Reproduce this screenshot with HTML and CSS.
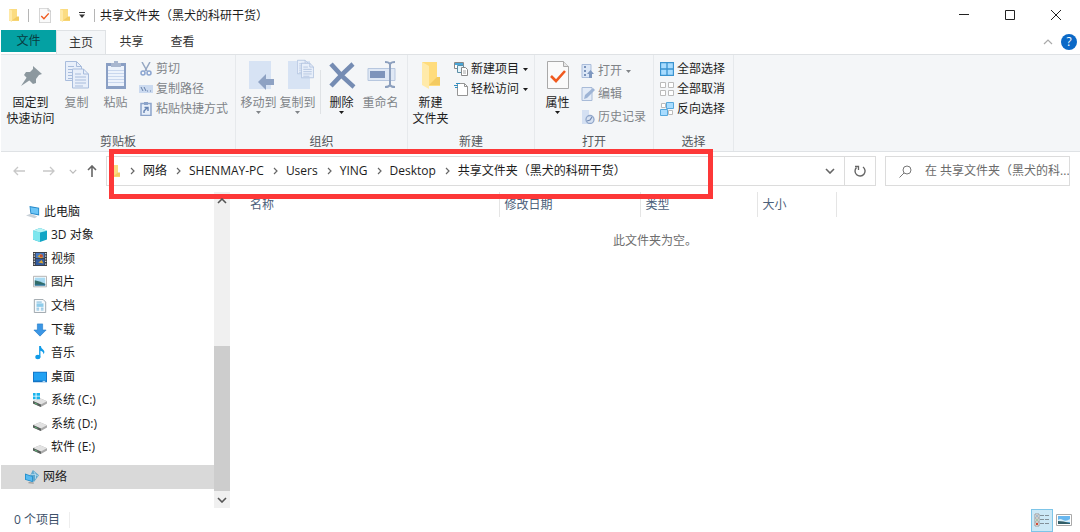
FILE: index.html
```html
<!DOCTYPE html>
<html lang="zh-CN">
<head>
<meta charset="utf-8">
<title>共享文件夹（黑犬的科研干货）</title>
<link rel="stylesheet" href="styles.css">
</head>
<body>
<svg class="defs" aria-hidden="true">
  <symbol id="folder" viewBox="0 0 12 14"><path d="M1 1h8v8h2v4H1z" fill="#fbdc82"/><path d="M1 1l3 1.500v11.500L1 12.500z" fill="#ffe9a6"/><path d="M4 12.500h7v-4H9" fill="#f3cb62"/></symbol>
  <symbol id="checkdoc" viewBox="0 0 22 28"><path d="M.5.5h16l5 5v22H.5z" fill="#fafafa" stroke="#a9a9a9"/><path d="M16.500.5v5h5" fill="#e6e6e6" stroke="#a9a9a9"/><path d="M4 15l5 5 9-10" fill="none" stroke="#f0591e" stroke-width="2.600"/></symbol>
  <symbol id="page" viewBox="0 0 17 20"><path d="M.5.5h11l5 5v14H.5z" fill="#e8effa" stroke="#a8bcdc"/><path d="M11.500.5v5h5M3 5.500h6M3 8.500h11M3 11.500h11M3 14.500h11M3 17.500h8" fill="none" stroke="#a8bcdc"/></symbol>
  <symbol id="drive" viewBox="0 0 16 14"><path d="M0 7l8-3 8 3.500v2.500l-7 4-9-4z" fill="#a9a9a9"/><path d="M0 7l8-3 8 3.500-7 3.500z" fill="#e2e2e2"/><path d="M0 7l9 4v3L0 10z" fill="#555b58"/><path d="M2 9.500l3 1.500" stroke="#5cc47a"/></symbol>
  <symbol id="sep" viewBox="0 0 5 8"><path d="M1 1l3 3-3 3" fill="none" stroke="#666" stroke-width="1.200"/></symbol>
  <symbol id="down" viewBox="0 0 10 6"><path d="M1 1l4 4 4-4" fill="none" stroke="currentColor" stroke-width="1.600"/></symbol>
  <symbol id="caret" viewBox="0 0 5 3"><path d="M0 0h5L2.500 3z" fill="currentColor"/></symbol>
</svg>

<div class="window">
  <header class="titlebar">
    <svg class="s12"><use href="#folder"/></svg>
    <span class="rule"></span>
    <svg class="titledoc"><use href="#checkdoc"/></svg>
    <svg class="s12"><use href="#folder"/></svg>
    <svg class="quick" viewBox="0 0 6 6"><path d="M0 .5h6" stroke="#333"/><path d="M0 2.500h6L3 6z" fill="#333"/></svg>
    <span class="rule"></span>
    <h1>共享文件夹（黑犬的科研干货）</h1>
    <div class="controls">
      <button aria-label="最小化"><svg viewBox="0 0 10 10"><path d="M0 4.500h10"/></svg></button>
      <button aria-label="最大化"><svg viewBox="0 0 10 10"><path d="M.5.5h9v9h-9z"/></svg></button>
      <button aria-label="关闭"><svg viewBox="0 0 10 10"><path d="M0 0l10 10M10 0L0 10"/></svg></button>
    </div>
  </header>

  <nav class="tabs">
    <button class="file">文件</button>
    <button class="active">主页</button>
    <button>共享</button>
    <button>查看</button>
    <div class="help">
      <button aria-label="折叠功能区"><svg class="fold" viewBox="0 0 10 6"><path d="M1 5l4-4 4 4" fill="none" stroke="#aaa" stroke-width="1.200"/></svg></button>
      <button class="question" aria-label="帮助">?</button>
    </div>
  </nav>

  <section class="ribbon">
    <div class="group clipboard">
      <div class="tools">
        <button class="big wide"><svg viewBox="0 0 32 32"><g fill="#8c989f"><path d="M18 7l9 8-3 1-3 4v4l-3 1-9-9 2-3h4l3-3z"/><path d="M12 18l3 3-9 6z"/></g></svg><span>固定到<br>快速访问</span></button>
        <button class="big dim"><svg viewBox="0 0 32 32"><use href="#page" x="4" y="2" width="17" height="20"/><use href="#page" x="11" y="9" width="17" height="21"/></svg><span>复制</span></button>
        <button class="big dim"><svg viewBox="0 0 32 32"><path d="M6 4h20v26H6z" fill="#8a9fc4"/><path d="M8 7h16v20H8z" fill="#edf3fc"/><path d="M11 4h3V2h4v2h3v4H11z" fill="#a9b7cf"/><path d="M8 11.500h16M8 14.500h16M8 17.500h16M8 20.500h16M8 23.500h16" stroke="#c9d7ee"/></svg><span>粘贴</span></button>
        <div class="small-list dim">
          <button><svg viewBox="0 0 14 14"><path d="M3 0l5 9M11 0L6 9" stroke="#94a6c2" stroke-width="1.500"/><circle cx="4" cy="11" r="2" fill="none" stroke="#8ba5d0" stroke-width="1.500"/><circle cx="10" cy="11" r="2" fill="none" stroke="#8ba5d0" stroke-width="1.500"/></svg>剪切</button>
          <button><svg viewBox="0 0 14 14"><path d="M0 3h14v8H0z" fill="#cbdaf0"/><path d="M2 5l2 4M5 5l2 4M8 9h1M11 9h1" stroke="#657fa8"/></svg>复制路径</button>
          <button><svg viewBox="0 0 14 14"><path d="M2 1.500h10v12H2z" fill="#e7effa" stroke="#8ca4ca" stroke-width="1.500"/><path d="M5 0h4v3H5z" fill="#8ca4ca"/><path d="M5 11V9l3-3M5.500 5.500H9V9" fill="none" stroke="#6583b2" stroke-width="1.400"/></svg>粘贴快捷方式</button>
        </div>
      </div>
      <h2>剪贴板</h2>
    </div>

    <div class="group organize">
      <div class="tools">
        <button class="big dim"><svg viewBox="0 0 32 32"><path d="M6 2h22v28H6z" fill="#d7e3f4"/><path d="M15 23l8-8v5h8v6h-8v5z" fill="#8ea2c3"/></svg><span>移动到</span><svg class="caret"><use href="#caret"/></svg></button>
        <button class="big dim"><svg viewBox="0 0 32 32"><path d="M6 2h22v28H6z" fill="#d7e3f4"/><use href="#page" x="15" y="0" width="12" height="16"/><use href="#page" x="19" y="3" width="13" height="17"/></svg><span>复制到</span><svg class="caret"><use href="#caret"/></svg></button>
        <span class="divider"></span>
        <button class="big"><svg viewBox="0 0 32 32"><path d="M5 5q11 13 23 23M27 5Q15 16 5 27" fill="none" stroke="#758cb3" stroke-width="4.500"/></svg><span>删除</span><svg class="caret"><use href="#caret"/></svg></button>
        <button class="big dim"><svg viewBox="0 0 32 32"><path d="M3 9.500h27v12H3z" fill="#dfe8f5" stroke="#b7c7df"/><path d="M5 12h15v7H5z" fill="#7e94bb"/><path d="M20 3q4 0 5 2q1-2 5-2M25 5v22M20 28q4 0 5-2q1 2 5 2" fill="none" stroke="#8da0be" stroke-width="2"/></svg><span>重命名</span></button>
      </div>
      <h2>组织</h2>
    </div>

    <div class="group create">
      <div class="tools">
        <button class="big"><svg viewBox="0 0 32 32"><path d="M7 3h15v16h3v8H14z" fill="#ffdc7c"/><path d="M7 3l7 4v23l-7-4z" fill="#ffeaaa"/><path d="M14 26h11v-8h-3" fill="#f3ca61"/></svg><span>新建<br>文件夹</span></button>
        <div class="small-list">
          <button><svg viewBox="0 0 14 14"><path d="M.5.5h9v6h-9z" fill="#fff" stroke="#888"/><path d="M1 1h8v2H1z" fill="#48a5d7"/><path d="M3.500 3.500h6v7h-6z" fill="#e7f5fb" stroke="#5b8ea6"/><path d="M7.500 5.500h4l2 2v6h-6z" fill="#fff" stroke="#888"/><path d="M9 9h3M9 11h3" stroke="#a5a5a5"/></svg>新建项目<svg class="caret"><use href="#caret"/></svg></button>
          <button><svg viewBox="0 0 14 14"><path d="M3.500 1.500h7l3 3v9h-10z" fill="#fff" stroke="#959595"/><path d="M10.500 1.500v3h3" fill="none" stroke="#959595"/><path d="M2 1.500h4M0 3.500h4M1 5.500h3" stroke="#318fc2"/></svg>轻松访问<svg class="caret"><use href="#caret"/></svg></button>
        </div>
      </div>
      <h2>新建</h2>
    </div>

    <div class="group open">
      <div class="tools">
        <button class="big"><svg viewBox="0 0 32 32"><use href="#checkdoc" x="5" y="2" width="22" height="28"/></svg><span>属性</span><svg class="caret"><use href="#caret"/></svg></button>
        <div class="small-list loose dim">
          <button><svg viewBox="0 0 14 14"><path d="M1 .5h9v13H1z" fill="#dce7f6" stroke="#aabddb"/><path d="M3 2h2v2H3zM3 6h2v2H3zM3 10h2v2H3z" fill="#7992ba"/><path d="M6 10l3.500-4L13 10h-2v4H8v-4z" fill="#7f98c0"/></svg>打开<svg class="caret"><use href="#caret"/></svg></button>
          <button><svg viewBox="0 0 14 14"><path d="M1 .5h10v13H1z" fill="#e3ebf7" stroke="#a8bbd8"/><path d="M3 12l1-4 8-7 2 2-8 8z" fill="#9eb4d5"/></svg>编辑</button>
          <button><svg viewBox="0 0 14 14"><path d="M1 0h7v14H1z" fill="#d4e0f2"/><circle cx="9" cy="9.500" r="4" fill="#d7e2f2" stroke="#91a7cb" stroke-width="1.300"/><path d="M6 11l3-1 2-3" fill="none" stroke="#7189b3" stroke-width="1.200"/></svg>历史记录</button>
        </div>
      </div>
      <h2>打开</h2>
    </div>

    <div class="group select">
      <div class="tools">
        <div class="small-list">
          <button><svg viewBox="0 0 14 14"><path d="M.5.5h13v13H.5zM7 .5v13M.5 7h13" fill="#a8dcff" stroke="#3a93cf" stroke-width="1.300"/></svg>全部选择</button>
          <button><svg viewBox="0 0 14 14"><path d="M.5.5h5v5h-5zM8.500.5h5v5h-5zM.5 8.500h5v5h-5zM8.500 8.500h5v5h-5z" fill="#fff" stroke="#bbb"/></svg>全部取消</button>
          <button><svg viewBox="0 0 14 14"><path d="M1.500 1.500h4v4h-4zM8.500 8.500h4v4h-4z" fill="#fff" stroke="#bbb"/><path d="M6.500.5h7v6h-7zM.5 7.500h7v6h-7z" fill="#a8dcff" stroke="#57a8dc"/></svg>反向选择</button>
        </div>
      </div>
      <h2>选择</h2>
    </div>
  </section>

  <section class="location">
    <div class="history">
      <button aria-label="后退"><svg viewBox="0 0 12 12"><path d="M12 6H1M5 2L1 6l4 4"/></svg></button>
      <button aria-label="前进"><svg viewBox="0 0 12 12"><path d="M0 6h11M7 2l4 4-4 4"/></svg></button>
      <button class="recent" aria-label="最近位置"><svg class="tiny"><use href="#down"/></svg></button>
      <button class="up" aria-label="上移"><svg viewBox="0 0 12 12"><path d="M6 12V1M2 5l4-4 4 4"/></svg></button>
    </div>
    <div class="address">
      <svg class="s12"><use href="#folder"/></svg>
      <div class="crumbs">
        <svg><use href="#sep"/></svg><a href="#net">网络</a>
        <svg><use href="#sep"/></svg><a href="#pc">SHENMAY-PC</a>
        <svg><use href="#sep"/></svg><a href="#users">Users</a>
        <svg><use href="#sep"/></svg><a href="#ying">YING</a>
        <svg><use href="#sep"/></svg><a href="#desktop">Desktop</a>
        <svg><use href="#sep"/></svg><a href="#share">共享文件夹（黑犬的科研干货）</a>
      </div>
      <button class="drop" aria-label="以前的位置"><svg class="chev"><use href="#down"/></svg></button>
      <button class="refresh" aria-label="刷新"><svg viewBox="0 0 12 12"><path d="M2.500 2.500A5 5 0 1 0 9 2" fill="none" stroke="#666" stroke-width="1.400"/><path d="M1 1.500h3.500V5" fill="none" stroke="#666" stroke-width="1.300"/></svg></button>
    </div>
    <label class="search">
      <svg viewBox="0 0 13 13"><circle cx="8" cy="5" r="4"/><path d="M5 8l-4.500 4.500"/></svg>
      <input type="text" aria-label="搜索" placeholder="在 共享文件夹（黑犬的科...">
    </label>
    <div class="highlight"></div>
  </section>

  <main class="body">
    <aside class="sidebar">
      <ul class="tree">
        <li class="root"><svg viewBox="0 0 16 16"><path d="M4 1l11 2v9L5 10z" fill="#2388c9"/><path d="M5 2.500l9 1.500v6.500L6 9z" fill="#6cc5f6"/><path d="M0 12l5-2 8 3-3 2z" fill="#c9d1d8"/></svg>此电脑</li>
        <li><svg viewBox="0 0 16 16"><path d="M0 3l8-3 8 3v10l-8 3-8-3z" fill="#10a5c5"/><path d="M0 3l8 2v11l-8-3z" fill="#7de6ee"/><path d="M0 3l8-3 8 3-8 2z" fill="#b6f4f5"/></svg>3D 对象</li>
        <li><svg viewBox="0 0 16 16"><path d="M0 0h16v16H0z" fill="#3c3c3f"/><path d="M3 1h10v6H3z" fill="#497bc4"/><path d="M3 8h10v7H3z" fill="#315b9f"/><path d="M5 5l4-3 3 4-3 1zM6 12l4-3 2 4z" fill="#d7a338"/><path d="M8 3h3v3H8z" fill="#c34c35"/><path d="M1.500 1v14M14.500 1v14" stroke="#ddd" stroke-width="1.500" stroke-dasharray="1.500 1.500"/></svg>视频</li>
        <li><svg viewBox="0 0 16 16"><path d="M.5 1.500h15v12H.5z" fill="#fff" stroke="#aaa"/><path d="M2 3h12v9H2z" fill="#a9daf2"/><path d="M2 6q5 1 12 4v2H2z" fill="#326c69"/><path d="M2 11h12v1H2z" fill="#2d78b4"/></svg>图片</li>
        <li><svg viewBox="0 0 16 16"><path d="M1.500.5h10l3 3v12h-13z" fill="#f7fafc" stroke="#929ba2"/><path d="M4 3.500h6M4 10.500h3M9 10.500h3M4 12.500h3M9 12.500h3" stroke="#66aed8"/><path d="M4 5h8v4H4z" fill="#8fcceb"/></svg>文档</li>
        <li><svg viewBox="0 0 16 16"><path d="M5 1h6v7h4l-7 7-7-7h4z" fill="#3b96e5" stroke="#2379c6" stroke-width=".7"/></svg>下载</li>
        <li><svg viewBox="0 0 16 16"><ellipse cx="5.500" cy="12.500" rx="3" ry="2.500" fill="#109be8"/><path d="M7 0h2q0 3 3 4.500 2 2 0 5 0-3-3.500-4V13H7z" fill="#109be8"/></svg>音乐</li>
        <li><svg viewBox="0 0 16 16"><path d="M0 2h16v12H0z" fill="#1474c4"/><path d="M1 3h14v9H1z" fill="#22a2f3"/><path d="M11 13h3" stroke="#e3f5ff"/></svg>桌面</li>
        <li><svg viewBox="0 0 16 16"><use href="#drive" y="2" width="16" height="14"/><path d="M0 0h3v3H0zM4 0h4v3H4zM0 4h3v3H0zM4 4h4v3H4z" fill="#19b4ed"/></svg>系统 (C:)</li>
        <li><svg viewBox="0 0 16 16"><use href="#drive" y="2" width="16" height="14"/></svg>系统 (D:)</li>
        <li><svg viewBox="0 0 16 16"><use href="#drive" y="2" width="16" height="14"/></svg>软件 (E:)</li>
      </ul>
      <div class="network"><svg viewBox="0 0 16 16"><path d="M9 0l7 6-6 8-4-8z" fill="#5da6cc"/><path d="M10 2q3 2 2 8M7 5q5-1 8 2" fill="none" stroke="#b9def0"/><path d="M0 4l9 3v7l-9-3z" fill="#218ecb"/><path d="M1 5.500l7 2.300v4.700l-7-2z" fill="#57b9f0"/><path d="M4 14.500l6 .5" stroke="#999" stroke-width="1.500"/></svg>网络</div>
    </aside>
    <div class="scrollbar">
      <button aria-label="向上滚动"><svg class="chev flip"><use href="#down"/></svg></button>
      <span class="thumb"></span>
      <button aria-label="向下滚动"><svg class="chev"><use href="#down"/></svg></button>
    </div>
    <section class="content">
      <table>
        <thead><tr><th class="name">名称</th><th class="date">修改日期</th><th class="type">类型</th><th class="size">大小</th></tr></thead>
      </table>
      <p>此文件夹为空。</p>
    </section>
  </main>

  <footer class="status">
    <span class="count">0 个项目</span>
    <button class="view chosen" aria-label="详细信息"><svg viewBox="0 0 16 14"><path d="M1 1h4v12H1zM1 5h4M1 9h4" fill="#fff" stroke="#999"/><path d="M6 2.500h4M11 2.500h4M6 6.500h4M11 6.500h4M6 10.500h4M11 10.500h4" stroke="#829099"/><path d="M2 3h2" stroke="#44799c"/><path d="M2 7h2" stroke="#4f8a54"/><path d="M2 11h2" stroke="#d24b35" stroke-width="2"/></svg></button>
    <button class="view" aria-label="大图标"><svg viewBox="0 0 16 14"><path d="M.5 1.500h15v11H.5z" fill="#fff" stroke="#aaa"/><path d="M2 3h12v8H2z" fill="#68b7ef"/><path d="M2 7q2-2 5 0t7-1v3H2z" fill="#d8eef8"/><path d="M2 8q5 0 12 2v1H2z" fill="#315d67"/></svg></button>
  </footer>
</div>
</body>
</html>
```
FILE: styles.css
```css
* { box-sizing: border-box; }

body {
  margin: 0;
  background: #fff;
  color: #1c1c1c;
  font: 12px/16px "Open Sans", "Noto Sans CJK SC", sans-serif;
}

button {
  display: flex;
  align-items: center;
  justify-content: center;
  margin: 0;
  padding: 0;
  border: 0;
  background: none;
  color: inherit;
  font: inherit;
  white-space: nowrap;
}

svg { flex: none; display: block; }
h1, h2, p, ul { margin: 0; padding: 0; font-size: 12px; font-weight: 400; }
a { color: inherit; text-decoration: none; }

.defs { display: none; }
.s12 { width: 12px; height: 14px; }
.chev { width: 10px; height: 6px; }
.tiny { width: 8px; height: 5px; }
.flip { transform: rotate(180deg); }
.caret { width: 5px; height: 3px; }

.window {
  display: flex;
  flex-direction: column;
  min-height: 100vh;
  padding-left: 1px;
}

/* Title bar */
.titlebar {
  display: flex;
  align-items: center;
  height: 30px;
  padding: 0 1px 0 7px;
}
.titlebar h1 { padding-top: 2px; }
.rule { width: 1px; height: 13px; background: #b5b5b5; margin: 0 5px 0 8px; }
.titledoc { width: 12px; height: 15px; margin: 0 8px 0 5px; }
.quick { width: 6px; height: 6px; margin: 0 1px 0 8px; }
.controls { display: flex; margin-left: auto; }
.controls button { width: 46px; height: 30px; }
.controls svg { width: 10px; height: 10px; fill: none; stroke: #222; }

/* Tabs */
.tabs { display: flex; height: 24px; }
.tabs > button { width: 51px; color: #333; }
.tabs .file { width: 55px; height: 22px; background: #04a1a3; color: #093c40; }
.tabs .active {
  width: 50px;
  background: #f4f6f8;
  border: 1px solid #dfe2e5;
  border-bottom: 0;
}
.help { display: flex; align-items: center; gap: 8px; margin-left: auto; padding-right: 3px; }
.fold { width: 10px; height: 6px; }
.question {
  width: 16px;
  height: 16px;
  border-radius: 50%;
  background: #0b69c7;
  color: #fff;
}

/* Ribbon */
.ribbon {
  display: flex;
  background: #f4f6f8;
  border-top: 1px solid #dfe2e5;
  border-bottom: 1px solid #dfe2e5;
}
.group {
  display: flex;
  flex-direction: column;
  justify-content: space-between;
  height: 96px;
  padding: 4px 3px 1px;
  border-right: 1px solid #e6e9ec;
}
.group h2 { text-align: center; color: #55585c; }
.tools { display: flex; align-items: flex-start; }
.clipboard { width: 235px; }
.organize { width: 172px; }
.create { width: 127px; }
.open { width: 119px; }
.select { width: 80px; padding-left: 6px; padding-right: 6px; }
.big { flex: none; flex-direction: column; width: 39px; }
.big.wide { width: 53px; }
.big > svg:first-child { width: 32px; height: 32px; }
.big span { margin-top: 4px; }
.dim { color: #808488; }
.small-list { display: flex; flex: none; flex-direction: column; gap: 4px; padding: 2px 0 0 4px; }
.select .small-list { padding-left: 0; }
.small-list.loose { gap: 7px; padding-top: 4px; }
.small-list button { justify-content: flex-start; gap: 3px; }
.small-list button > svg:first-child { width: 14px; height: 14px; }
.small-list .caret { margin-left: 1px; }
.divider { width: 1px; height: 44px; margin: 11px 1px 0 3px; background: #dfe2e5; }

/* Address row */
.location {
  position: relative;
  display: flex;
  gap: 9px;
  height: 40px;
  padding: 4px 10px 6px 9px;
}
.history { display: flex; align-items: center; width: 87px; gap: 18px; padding-left: 3px; color: #bbb; }
.history svg { width: 12px; height: 12px; fill: none; stroke: #c8c8c8; stroke-width: 1.3; }
.history .tiny { width: 8px; height: 5px; }
.history .recent { margin-right: -9px; margin-left: -4px; }
.history .up svg { stroke: #666; stroke-width: 1.6; }
.address { display: flex; align-items: center; flex: 1; border: 1px solid #dcdcdc; padding-left: 2px; }
.crumbs { display: flex; align-items: center; flex: 1; white-space: nowrap; }
.crumbs svg { width: 5px; height: 8px; margin: 0 8px 0 9px; }
.drop { width: 28px; height: 28px; color: #666; }
.refresh { width: 31px; height: 28px; border-left: 1px solid #dcdcdc; }
.refresh svg { width: 12px; height: 12px; }
.search { display: flex; align-items: center; width: 185px; border: 1px solid #dcdcdc; padding-left: 13px; }
.search svg { width: 13px; height: 13px; fill: none; stroke: #777; }
.search input {
  flex: 1;
  min-width: 0;
  margin-left: 13px;
  padding: 0;
  border: 0;
  outline: 0;
  background: none;
  font: inherit;
}
.search input::placeholder { color: #6b6b6b; opacity: 1; }
.highlight {
  position: absolute;
  left: 108px;
  top: -3px;
  width: 604px;
  height: 50px;
  border: 5px solid #fd3838;
  pointer-events: none;
}

/* Navigation pane and file list */
.body { display: flex; flex: 1; }
.sidebar { display: flex; flex-direction: column; width: 213px; padding: 8px 0 19px; }
.tree { display: flex; flex-direction: column; flex: 1; list-style: none; margin-bottom: 6px; }
.tree li { display: flex; align-items: center; flex: 1; gap: 4px; padding-left: 32px; }
.tree .root { padding-left: 25px; }
.sidebar svg { width: 14px; height: 14px; }
.network { display: flex; align-items: center; gap: 4px; height: 24px; padding-left: 24px; background: #d9d9d9; }
.scrollbar { display: flex; flex-direction: column; width: 16px; background: #f0f0f0; color: #555; }
.scrollbar button { height: 17px; }
.thumb { height: 145px; margin-top: auto; background: #cdcdcd; }
.content { flex: 1; }
table { border-collapse: collapse; table-layout: fixed; width: 606px; }
th {
  height: 25px;
  padding: 0 0 0 5px;
  border-right: 1px solid #e5e5e5;
  color: #4c607a;
  font-weight: 400;
  text-align: left;
}
.name { width: 269px; padding-left: 20px; }
.date { width: 141px; }
.type { width: 117px; }
.size { width: 79px; }
.content p { padding-top: 16px; text-align: center; color: #6d6d6d; }

/* Status bar */
.status { display: flex; align-items: center; height: 24px; padding: 0 5px 0 13px; color: #3d5069; }
.count { margin-right: auto; padding-right: 9px; border-right: 1px solid #eee; }
.view { width: 22px; height: 23px; }
.view svg { width: 16px; height: 14px; }
.chosen { background: #cce8f6; border: 1px solid #7dc5e8; }
```
